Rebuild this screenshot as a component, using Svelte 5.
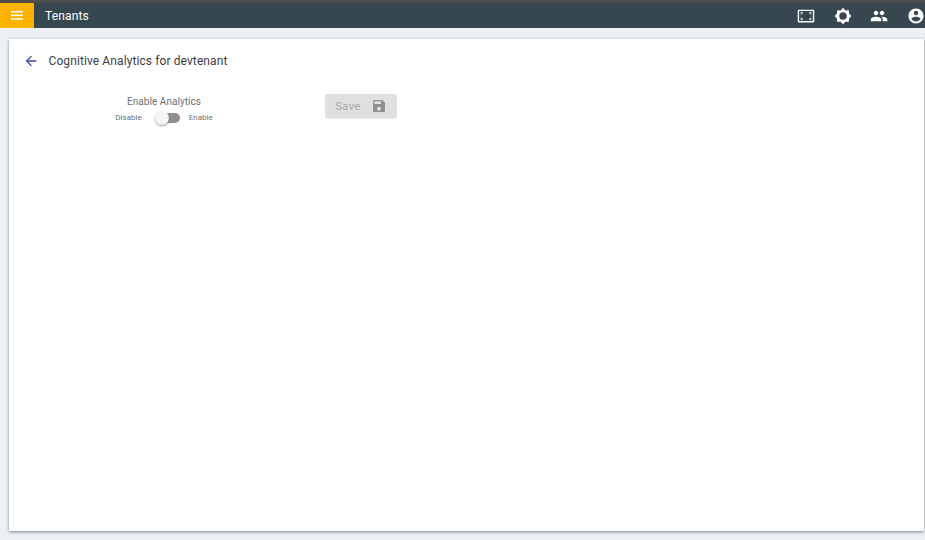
<script>
    let enabled = $state(false);
</script>

<style>
    :global(body) {
        margin: 0;
        background: #ecf0f4;
        font-family: Roboto, "Liberation Sans", sans-serif;
    }

    .page {
        height: 540px;
        display: flex;
        flex-direction: column;
        overflow: hidden;
    }

    .topbar {
        flex: none;
        box-sizing: border-box;
        height: 28px;
        border-top: 3px solid #4d4d4d;
        background: #37474f;
        display: flex;
        align-items: center;
        color: #fff;
    }

    .menu {
        width: 33.500px;
        height: 25px;
        background: #ffb300;
        border: 0;
        padding: 0;
        display: flex;
        align-items: center;
        justify-content: center;
    }

    .title {
        margin-left: 11.500px;
        font-size: 12px;
        letter-spacing: 0.15px;
        flex: 1;
    }

    .actions {
        display: flex;
        align-items: center;
        gap: 18.500px;
        margin-right: 0.500px;
    }

    .actions svg {
        display: block;
        width: 18px;
        height: 18px;
        fill: #fff;
    }

    .card {
        margin: 10.500px 1px 9px 9px;
        flex: 1;
        background: #fff;
        box-shadow: 0 1px 3px rgba(0, 0, 0, 0.45);
        padding: 0 14px;
    }

    .heading {
        display: flex;
        align-items: center;
        height: 45.500px;
        gap: 9.500px;
        color: #3c4043;
        font-size: 12px;
        letter-spacing: 0.1px;
    }

    .heading svg {
        width: 16px;
        height: 16px;
        fill: #3f4aa5;
        flex: none;
    }

    .form {
        display: flex;
        margin-top: 10px;
    }

    .analytics {
        width: 282px;
        display: flex;
        flex-direction: column;
        align-items: center;
        color: #6b7078;
    }

    .label {
        font-size: 10px;
        letter-spacing: 0.05px;
        line-height: 13px;
        margin-top: 1px;
    }

    .switch-row {
        display: flex;
        align-items: center;
        height: 18px;
        font-size: 8px;
    }

    .switch {
        position: relative;
        width: 25px;
        height: 14px;
        margin: 1px 9px 0 13px;
    }

    .track {
        position: absolute;
        left: 1px;
        right: 0;
        top: 2px;
        height: 10px;
        border-radius: 5px;
        background: #909090;
    }

    .thumb {
        position: absolute;
        left: 0;
        top: 0;
        width: 14px;
        height: 14px;
        border-radius: 50%;
        background: #f5f5f5;
        box-shadow: 0 1px 2px rgba(0, 0, 0, 0.4);
    }

    .save {
        width: 72px;
        height: 24px;
        margin-left: 20px;
        border: 0;
        border-radius: 3px;
        background: #e0e0e0;
        box-shadow: 0 1px 1px rgba(0, 0, 0, 0.1);
        color: #a8a8a8;
        font-family: inherit;
        font-size: 11px;
        letter-spacing: 0.4px;
        display: flex;
        align-items: center;
        justify-content: center;
        gap: 10px;
        padding: 0;
    }

    .save svg {
        width: 16px;
        height: 16px;
        fill: #8f9295;
    }
</style>

<div class="page">
    <header class="topbar">
        <button class="menu" aria-label="menu">
            <svg width="12" height="9" viewBox="0 0 12 9" fill="#fff">
                <rect width="12" height="1.500" />
                <rect y="3.600" width="12" height="1.500" />
                <rect y="7.200" width="12" height="1.500" />
            </svg>
        </button>
        <div class="title">Tenants</div>
        <div class="actions">
            <svg viewBox="0 0 24 24"><path d="M2.500 3.500h19A1.500 1.500 0 0 1 23 5v14a1.500 1.500 0 0 1-1.500 1.500h-19A1.500 1.500 0 0 1 1 19V5a1.500 1.500 0 0 1 1.500-1.500zm.3 1.700v13.600h18.400V5.200zM5 7h3v1.200H6.200V10H5zM19 7v3h-1.200V8.200H16V7zM5 17v-3h1.200v1.800H8V17zM19 17h-3v-1.200h1.800V14H19z" /></svg>
            <svg viewBox="0 0 24 24"><path d="M12 1l3.200 3.500 4.600-.3.300 4.600L23 12l-2.900 3.200-.3 4.600-4.600-.3L12 23l-3.200-3.500-4.600.3-.3-4.600L1 12l2.900-3.200.3-4.600 4.600.3zm0 6a5 5 0 1 0 0 10 5 5 0 0 0 0-10z" /></svg>
            <svg viewBox="0 0 24 24"><path d="M16 11c1.660 0 2.990-1.340 2.990-3S17.660 5 16 5s-3 1.340-3 3 1.340 3 3 3zm-8 0c1.660 0 2.990-1.340 2.990-3S9.660 5 8 5 5 6.340 5 8s1.340 3 3 3zm0 2c-2.330 0-7 1.170-7 3.500V19h14v-2.500C15 14.170 10.330 13 8 13zm8 0c-.29 0-.62.020-.97.050 1.160.84 1.970 1.970 1.970 3.450V19h6v-2.500c0-2.330-4.670-3.500-7-3.500z" /></svg>
            <svg viewBox="0 0 24 24"><path d="M12 2C6.480 2 2 6.480 2 12s4.480 10 10 10 10-4.480 10-10S17.520 2 12 2zm0 3c1.660 0 3 1.340 3 3s-1.340 3-3 3-3-1.340-3-3 1.340-3 3-3zm0 14.200c-2.500 0-4.710-1.280-6-3.220.03-1.990 4-3.080 6-3.080 1.990 0 5.970 1.090 6 3.080-1.290 1.940-3.500 3.220-6 3.220z" /></svg>
        </div>
    </header>

    <main class="card">
        <div class="heading">
            <svg viewBox="0 0 24 24"><path d="M20 11H7.830l5.590-5.590L12 4l-8 8 8 8 1.410-1.410L7.830 13H20z" /></svg>
            <span>Cognitive Analytics for devtenant</span>
        </div>
        <div class="form">
            <div class="analytics">
                <div class="label">Enable Analytics</div>
                <div class="switch-row">
                    <span>Disable</span>
                    <div class="switch" data-on={enabled}>
                        <div class="track"></div>
                        <div class="thumb"></div>
                    </div>
                    <span>Enable</span>
                </div>
            </div>
            <button class="save" disabled>
                Save
                <svg viewBox="0 0 24 24"><path d="M17 3H5a2 2 0 0 0-2 2v14a2 2 0 0 0 2 2h14a2 2 0 0 0 2-2V7l-4-4zm-5 16a3 3 0 1 1 0-6 3 3 0 0 1 0 6zm3-10H5V5h10v4z" /></svg>
            </button>
        </div>
    </main>
</div>
